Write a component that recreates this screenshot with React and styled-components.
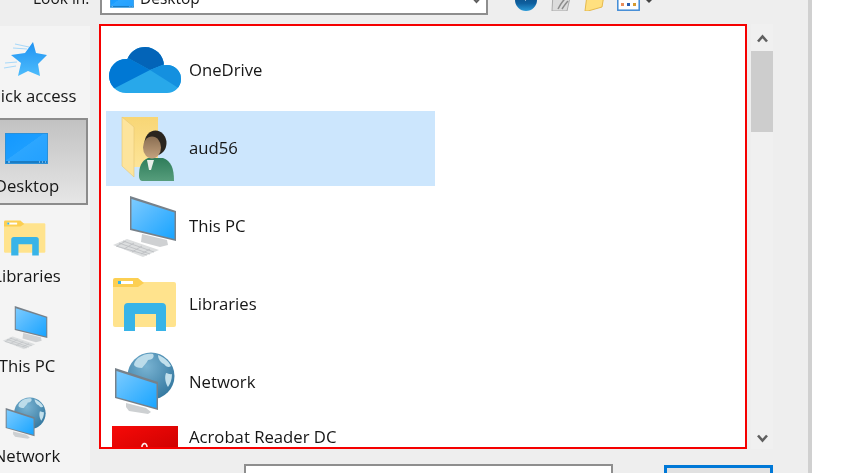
import React from "react";
import styled, { createGlobalStyle } from "styled-components";

const FONT = `"Open Sans", "Noto Sans", "Liberation Sans", sans-serif`;

const GlobalStyle = createGlobalStyle`
  html, body {
    margin: 0;
    padding: 0;
    background: #fff;
    overflow: hidden;
  }
  svg { display: block; flex: none; }
`;

function CloudIcon() {
  return (
    <svg width="73" height="47" viewBox="0 0 73 47">
      <defs>
        <clipPath id="cloudShape">
          <circle cx="18" cy="29" r="17" />
          <circle cx="37" cy="19" r="19" />
          <circle cx="59" cy="32" r="14" />
          <rect x="18" y="25" width="41" height="21" />
        </clipPath>
      </defs>
      <g clipPath="url(#cloudShape)">
        <rect width="73" height="47" fill="#28a8ea" />
        <path d="M0 0H20V11L42 23 7 41 0 45Z" fill="#0078d4" />
        <path d="M20 0H62L57 17 42 23 20 11Z" fill="#0364b8" />
        <path d="M62 0H73V42H72L42 23 57 17Z" fill="#1490df" />
      </g>
    </svg>
  );
}

function UserFolderIcon() {
  return (
    <svg width="55" height="66" viewBox="0 0 55 66">
      <defs>
        <linearGradient id="userFolderBack" x1="0" y1="0" x2="0" y2="1">
          <stop offset="0" stopColor="#f8d675" />
          <stop offset="1" stopColor="#fde498" />
        </linearGradient>
        <linearGradient id="userFace" x1="0" y1="0" x2="0" y2="1">
          <stop offset="0" stopColor="#8a6e52" />
          <stop offset="1" stopColor="#c4a27e" />
        </linearGradient>
        <linearGradient id="userBody" x1="0" y1="0" x2="0" y2="1">
          <stop offset="0" stopColor="#2f7d5a" />
          <stop offset="1" stopColor="#569d7c" />
        </linearGradient>
      </defs>
      <path d="M2 1H38V51H13Z" fill="url(#userFolderBack)" />
      <path d="M2 1L14 11V61L2 50Z" fill="#fde49c" stroke="#e8c873" strokeWidth=".6" />
      <path d="M19 60c0-9 2-15 9-18h15c8 3 11 10 11 23H22c-2 0-3-3-3-5Z" fill="url(#userBody)" />
      <path d="M27 44h7l-3 10h-2Z" fill="#e9eee9" />
      <ellipse cx="35.500" cy="27" rx="11" ry="12.500" fill="#2a251f" />
      <ellipse cx="32" cy="31.500" rx="9" ry="11" fill="url(#userFace)" />
    </svg>
  );
}

function ComputerIcon({ width = 65, height = 62 }) {
  return (
    <svg width={width} height={height} viewBox="0 0 65 62">
      <defs>
        <linearGradient id="pcScreen" x1="0" y1="0" x2="1" y2="1">
          <stop offset="0" stopColor="#7ccbff" />
          <stop offset=".5" stopColor="#4ab6ff" />
          <stop offset="1" stopColor="#18a4ff" />
        </linearGradient>
      </defs>
      <path d="M30 38l25 6 1 5-8 2-19-5Z" fill="#cfd1d3" />
      <path d="M18 0L64 15V45L18 34Z" fill="#77818a" />
      <path d="M19.500 3L62.500 16.500V43L19.500 32.500Z" fill="url(#pcScreen)" />
      <path d="M1 49L15 43 47 54 31 61Z" fill="#dcdedf" />
      <path d="M7 47L38 58M11 45L42 56M4 50L35 59M14 45L5 50M22 47L12 53M30 50L20 56M38 53L29 58" stroke="#bdc0c3" strokeWidth=".9" />
    </svg>
  );
}

function LibraryIcon({ width = 64, height = 53 }) {
  return (
    <svg width={width} height={height} viewBox="0 0 64 53">
      <rect x="0" y="4" width="63" height="45" rx="2" fill="#ffe38d" />
      <path d="M2 0H25L31 5 25 9H0V2Q0 0 2 0Z" fill="#fccf52" />
      <rect x="5" y="3" width="15" height="3" fill="#fff" />
      <rect x="5" y="3" width="3" height="3" fill="#38b4e8" />
      <path d="M11 53V29q0-4 4-4H49q4 0 4 4V53H43V36H22V53Z" fill="#38b4e8" />
    </svg>
  );
}

function NetworkIcon({ width = 61, height = 62 }) {
  return (
    <svg width={width} height={height} viewBox="0 0 61 62">
      <defs>
        <radialGradient id="netGlobe" cx=".4" cy=".3" r=".85">
          <stop offset="0" stopColor="#79b3d2" />
          <stop offset="1" stopColor="#2a6f98" />
        </radialGradient>
        <linearGradient id="netScreen" x1="0" y1="0" x2="1" y2="1">
          <stop offset="0" stopColor="#7ccbff" />
          <stop offset="1" stopColor="#18a4ff" />
        </linearGradient>
      </defs>
      <circle cx="37" cy="24" r="23.500" fill="url(#netGlobe)" />
      <path d="M24 6c5-4 11-5 15-4 2 3-1 6-5 6-1 3-4 5-6 8-4 0-7-1-8-3 0-3 2-5 4-7Z" fill="#bcdcea" />
      <path d="M44 3c5 2 10 5 13 11-2 2-5 1-7-2-3-1-6-5-6-9ZM52 21c2 0 4 2 6 1 0 6-2 10-4 13-2-3-4-9-2-14Z" fill="#c2e0ec" />
      <path d="M12 51l20 5 5 4-3 2-19-3-3-4Z" fill="#cdd0d2" />
      <path d="M1 16L44 30V58L1 46Z" fill="#77818a" />
      <path d="M2.500 19L42.500 32V56L2.500 45Z" fill="url(#netScreen)" />
    </svg>
  );
}

function AcrobatIcon() {
  return (
    <svg width="66" height="30" viewBox="0 0 66 30">
      <defs>
        <linearGradient id="acrobatRed" x1="0" y1="0" x2="1" y2="1">
          <stop offset="0" stopColor="#f70a08" />
          <stop offset="1" stopColor="#c90000" />
        </linearGradient>
      </defs>
      <rect width="66" height="30" fill="url(#acrobatRed)" />
      <path d="M30 24c-1-8 5-8 5-3 0 2-1 4-1 7M30 24c0 2 1 4 1 5" fill="none" stroke="#ffe6e6" strokeWidth="1.600" />
    </svg>
  );
}

function StarIcon() {
  return (
    <svg width="44" height="42" viewBox="0 -4 44 42">
      <defs>
        <linearGradient id="starFill" x1="0" y1="0" x2="0" y2="1">
          <stop offset="0" stopColor="#1f92f2" />
          <stop offset="1" stopColor="#4dbcfc" />
        </linearGradient>
      </defs>
      <path d="M12 3L26 6M10 7L24 8M2 22L14 21M1 27L13 25" stroke="#a8d8f8" strokeWidth="1.100" />
      <path d="M30 1L33 12 44 14 35 23 37 35 25 30 15 35 18 22 8 14 22 12Z" fill="url(#starFill)" />
    </svg>
  );
}

function DesktopIcon({ width = 43, height = 31 }) {
  return (
    <svg width={width} height={height} viewBox="0 0 43 31">
      <defs>
        <linearGradient id="deskFill" x1="0" y1="0" x2="1" y2="1">
          <stop offset="0" stopColor="#1398ff" />
          <stop offset=".45" stopColor="#1c9eff" />
          <stop offset=".46" stopColor="#2ca6ff" />
          <stop offset="1" stopColor="#22a0ff" />
        </linearGradient>
      </defs>
      <rect x=".5" y=".5" width="42" height="30" fill="url(#deskFill)" stroke="#2a90d8" />
      <rect x="1" y="28" width="41" height="2" fill="#1a7cc4" />
      <path d="M3 29h2M34 29h1M37 29h1M40 29h1" stroke="#c5e6ff" strokeWidth="1.200" />
    </svg>
  );
}

function BackIcon() {
  return (
    <svg width="22" height="22" viewBox="0 0 22 22">
      <defs>
        <linearGradient id="backFill" x1="0" y1="0" x2="0" y2="1">
          <stop offset="0" stopColor="#0c3f73" />
          <stop offset=".65" stopColor="#0e5f9e" />
          <stop offset="1" stopColor="#2b9ad8" />
        </linearGradient>
      </defs>
      <circle cx="11" cy="11" r="11" fill="url(#backFill)" />
      <path d="M5 7L11 3V5.500H16V10H11V12Z" fill="#e8f2fa" />
    </svg>
  );
}

function RecentIcon() {
  return (
    <svg width="21" height="22" viewBox="0 0 21 22">
      <path d="M3 4H21L17 22H2Z" fill="#dcdcdc" stroke="#aaa" />
      <path d="M8 20C11 14 14 10 18 7M12 20c2-3 4-6 6-8" stroke="#8c8c8c" strokeWidth="1.500" fill="none" />
    </svg>
  );
}

function NewFolderIcon() {
  return (
    <svg width="20" height="21" viewBox="0 0 20 21">
      <path d="M1 21L3 5H20L18 17 4 21Z" fill="#ffe07f" stroke="#e5b94d" />
    </svg>
  );
}

function ViewIcon() {
  return (
    <svg width="23" height="21" viewBox="0 0 23 21">
      <rect x=".8" y=".8" width="21.400" height="19.400" fill="#fff" stroke="#3f8ad6" strokeWidth="1.500" />
      <rect x="4" y="13" width="3" height="3" fill="#e98d5a" />
      <rect x="10" y="13" width="3" height="3" fill="#2a5fb0" />
      <rect x="16" y="13" width="3" height="3" fill="#d69a2e" />
    </svg>
  );
}

function Chevron({ up, width = 11, height = 9 }) {
  return (
    <svg width={width} height={height} viewBox="0 0 11 9">
      <path
        d={up ? "M1 7.500L5.500 2.500 10 7.500" : "M1 1.500L5.500 6.500 10 1.500"}
        fill="none"
        stroke="#5f5f5f"
        strokeWidth="2.600"
      />
    </svg>
  );
}

const places = [
  { label: "Quick access", icon: <StarIcon /> },
  { label: "Desktop", icon: <DesktopIcon />, active: true, nudge: 3 },
  { label: "Libraries", icon: <LibraryIcon width={42} height={36} /> },
  { label: "This PC", icon: <ComputerIcon width={46} height={44} /> },
  { label: "Network", icon: <NetworkIcon width={41} height={42} />, nudge: 2 },
];

const files = [
  { label: "OneDrive", icon: <CloudIcon /> },
  { label: "aud56", icon: <UserFolderIcon />, selected: true, nudge: 5 },
  { label: "This PC", icon: <ComputerIcon /> },
  { label: "Libraries", icon: <LibraryIcon /> },
  { label: "Network", icon: <NetworkIcon /> },
  { label: "Acrobat Reader DC", icon: <AcrobatIcon />, top: true },
];

export default function App() {
  return (
    <>
      <GlobalStyle />
      <Dialog>
        <Toolbar>
          <LookLabel>Look in:</LookLabel>
          <Combo>
            <ComboIcon>
              <DesktopIcon width={24} height={20} />
            </ComboIcon>
            <ComboText>Desktop</ComboText>
            <ComboArrow>
              <Chevron width={9} height={7} />
            </ComboArrow>
          </Combo>
          <ToolIcons>
            <BackIcon />
            <RecentIcon />
            <NewFolderIcon />
            <ViewIcon />
            <Caret />
          </ToolIcons>
        </Toolbar>
        <Body>
          <Sidebar>
            {places.map(({ label, icon, active, nudge }) => (
              <Place key={label} $active={active}>
                <PlaceIcon $nudge={nudge}>{icon}</PlaceIcon>
                <PlaceLabel>{label}</PlaceLabel>
              </Place>
            ))}
          </Sidebar>
          <Right>
            <ListArea>
              <FileList>
                {files.map(({ label, icon, selected, top, nudge }) => (
                  <FileRow key={label} $selected={selected}>
                    <FileIcon $top={top} $nudge={nudge}>{icon}</FileIcon>
                    <FileName $top={top}>{label}</FileName>
                  </FileRow>
                ))}
              </FileList>
              <Scrollbar>
                <Chevron up />
                <Thumb />
                <ScrollEnd>
                  <Chevron />
                </ScrollEnd>
              </Scrollbar>
            </ListArea>
            <Footer>
              <NameInput />
              <OpenButton />
            </Footer>
          </Right>
        </Body>
      </Dialog>
    </>
  );
}

const Dialog = styled.div`
  box-sizing: border-box;
  width: 812px;
  height: 100vh;
  display: flex;
  flex-direction: column;
  overflow: hidden;
  background: #eeeeee;
  border-right: 4px solid #d0d0d0;
  color: #161616;
  font-family: ${FONT};
  font-size: 16.7px;
  filter: blur(0.4px);
`;

const Toolbar = styled.div`
  flex: none;
  display: flex;
  align-items: center;
  height: 29px;
  margin-top: -14px;
  padding-left: 33px;
  font-size: 15.5px;
`;

const LookLabel = styled.span`
  width: 67px;
  margin-bottom: 6px;
`;

const Combo = styled.div`
  box-sizing: border-box;
  width: 388px;
  height: 29px;
  display: flex;
  align-items: center;
  padding: 0 5px 0 8px;
  background: #fff;
  border: 2px solid #8e8e8e;
`;

const ComboIcon = styled.div`
  margin-bottom: 4px;
`;

const ComboText = styled.span`
  margin: 0 0 6px 6px;
`;

const ComboArrow = styled.span`
  margin-left: auto;
`;

const ToolIcons = styled.div`
  display: flex;
  align-items: flex-end;
  gap: 13px;
  margin: 0 0 2px 27px;
  height: 22px;
`;

const Caret = styled.span`
  width: 0;
  height: 0;
  margin: 0 0 8px -7px;
  border-left: 3px solid transparent;
  border-right: 3px solid transparent;
  border-top: 3px solid #444;
`;

const Body = styled.div`
  flex: 1;
  min-height: 0;
  display: flex;
  margin-top: 9px;
`;

const Sidebar = styled.div`
  flex: none;
  box-sizing: border-box;
  width: 120px;
  margin: 2px 0 0 -30px;
  padding-top: 2px;
  display: flex;
  flex-direction: column;
  gap: 3px;
  overflow: hidden;
  background: #f4f4f4;
`;

const Place = styled.div`
  flex: none;
  box-sizing: border-box;
  width: 118px;
  height: 87px;
  display: flex;
  flex-direction: column;
  align-items: center;
  padding: 8px 4px 0 0;
  border: 2px solid ${({ $active }) => ($active ? "#8c8c8c" : "transparent")};
  background: ${({ $active }) =>
    $active ? "linear-gradient(#c2c2c2, #e6e6e6)" : "transparent"};
`;

const PlaceIcon = styled.div`
  height: 40px;
  margin-right: 5px;
  padding-left: ${({ $nudge }) => ($nudge ? `${$nudge}px` : "0")};
  display: flex;
  align-items: center;
  justify-content: center;
`;

const PlaceLabel = styled.span`
  margin-top: 6px;
  white-space: nowrap;
`;

const Right = styled.div`
  flex: none;
  display: flex;
  flex-direction: column;
  margin-left: 9px;
`;

const ListArea = styled.div`
  flex: none;
  display: flex;
  height: 425px;
`;

const FileList = styled.div`
  box-sizing: border-box;
  width: 648px;
  height: 425px;
  padding: 7px 0 0 5px;
  display: flex;
  flex-direction: column;
  align-items: flex-start;
  gap: 3px;
  overflow: hidden;
  background: #fff;
  border: 2px solid #f50000;
`;

const FileRow = styled.div`
  flex: none;
  width: 329px;
  height: 75px;
  display: flex;
  background: ${({ $selected }) => ($selected ? "#cce6fd" : "transparent")};
`;

const FileIcon = styled.div`
  width: 77px;
  margin-right: 6px;
  display: flex;
  justify-content: center;
  align-items: ${({ $top }) => ($top ? "flex-start" : "center")};
  padding-top: ${({ $top }) => ($top ? "3px" : "0")};
  padding-left: ${({ $nudge }) => ($nudge ? `${$nudge}px` : "0")};
  box-sizing: border-box;
`;

const FileName = styled.span`
  align-self: ${({ $top }) => ($top ? "flex-start" : "center")};
  margin: ${({ $top }) => ($top ? "2px 0 0" : "0 0 2px")};
  white-space: nowrap;
`;

const Scrollbar = styled.div`
  box-sizing: border-box;
  width: 22px;
  margin-left: 4px;
  padding-top: 10px;
  display: flex;
  flex-direction: column;
  align-items: center;
  background: #f0f0f0;
`;

const Thumb = styled.div`
  flex: none;
  width: 22px;
  height: 81px;
  margin-top: 8px;
  background: #cdcdcd;
`;

const ScrollEnd = styled.div`
  margin-top: auto;
  margin-bottom: 6px;
`;

const Footer = styled.div`
  flex: none;
  display: flex;
  align-items: flex-start;
  margin-top: 15px;
  padding-left: 145px;
`;

const NameInput = styled.div`
  box-sizing: border-box;
  width: 369px;
  height: 30px;
  background: #fff;
  border: 2px solid #8e8e8e;
`;

const OpenButton = styled.div`
  box-sizing: border-box;
  width: 109px;
  height: 30px;
  margin: 1px 0 0 51px;
  background: #e1e1e1;
  border: 3px solid #0078d7;
`;
